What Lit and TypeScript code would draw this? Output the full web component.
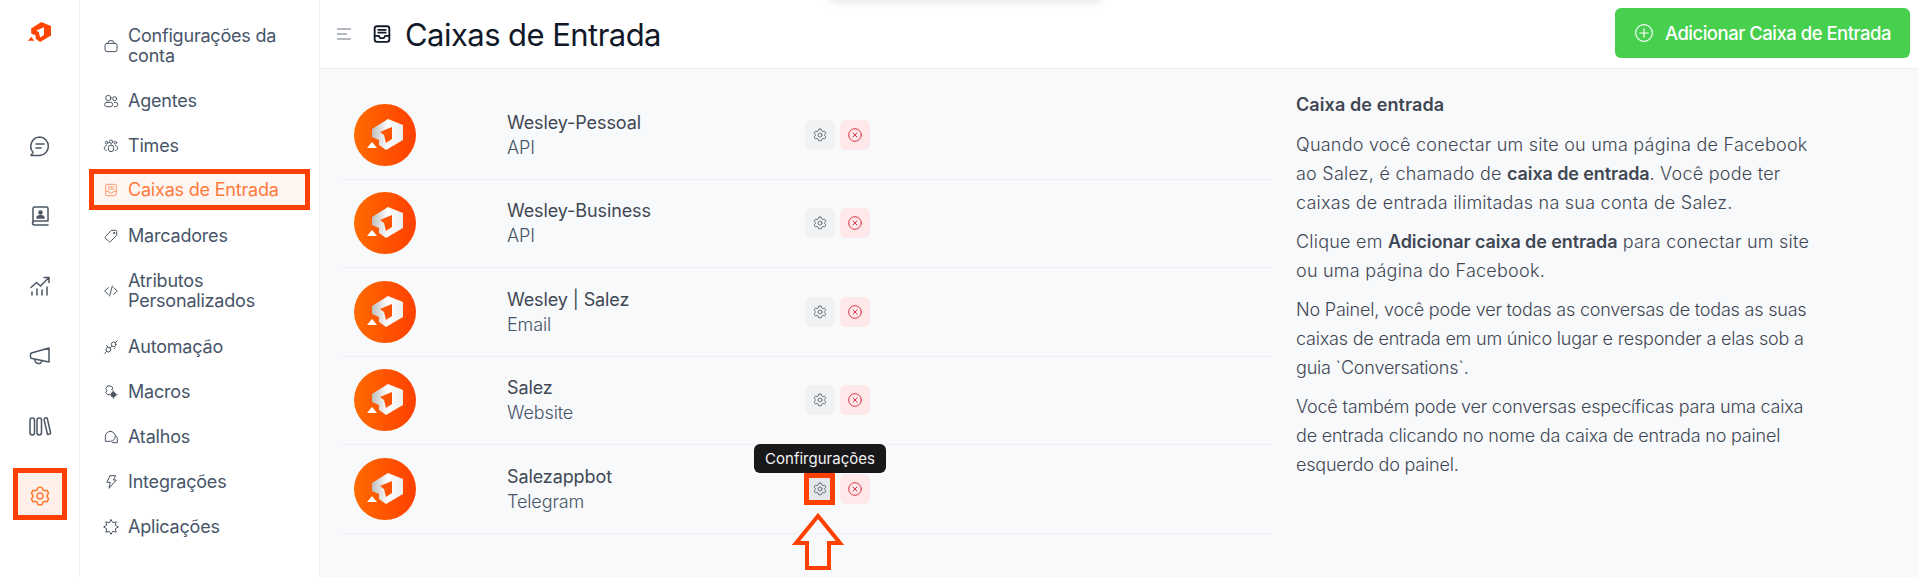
import { LitElement, html, css, svg } from "lit";
import { customElement } from "lit/decorators.js";

const ic = (body: unknown, size = 16, sw = 1.5) => html`<svg class="ic" width=${size} height=${size} viewBox="0 0 24 24" fill="none" stroke="currentColor" stroke-width=${sw} stroke-linecap="round" stroke-linejoin="round">${body}</svg>`;

const gearPath = svg`<path d="M12 3.2c.9 0 1.6.2 2.2.4l.5 2.2 1.9 1.1 2.2-.7c.8.9 1.4 2 1.8 3.2L19.1 11v2.1l1.5 1.6c-.4 1.2-1 2.3-1.8 3.2l-2.2-.7-1.9 1.1-.5 2.2c-1.4.4-3 .4-4.4 0l-.5-2.2-1.9-1.1-2.2.7c-.8-.9-1.4-2-1.8-3.2l1.5-1.6V11L3.4 9.4c.4-1.2 1-2.3 1.8-3.2l2.2.7 1.9-1.1.5-2.2c.6-.2 1.3-.4 2.2-.4z"/><circle cx="12" cy="12" r="3"/>`;
const inboxPath = svg`<rect x="4" y="3.5" width="16" height="17" rx="2.5"/><path d="M4 14h4.500l1.500 2.500h4l1.500-2.500H20M8 7.500h8M8 10.500h8"/>`;

const navItems: [string, unknown][] = [
  ["Configurações da conta", svg`<rect x="3" y="8" width="18" height="12.5" rx="3"/><path d="M8 8V6.500A2.500 2.500 0 0 1 10.500 4h3A2.500 2.500 0 0 1 16 6.500V8"/>`],
  ["Agentes", svg`<circle cx="8" cy="7.5" r="4"/><circle cx="17.5" cy="8.5" r="3"/><rect x="2.5" y="14" width="12" height="6.5" rx="3.2"/><path d="M17 20.500h2a3 3 0 0 0 0-6.500h-2"/>`],
  ["Times", svg`<circle cx="12" cy="5.5" r="2.5"/><circle cx="5.5" cy="7" r="2"/><circle cx="18.5" cy="7" r="2"/><rect x="8" y="10.5" width="8" height="10" rx="4"/><path d="M5 11.500c-2 .2-3 1.700-3 3.500s1 3.300 3 3.500M19 11.500c2 .2 3 1.700 3 3.500s-1 3.300-3 3.500"/>`],
  ["Caixas de Entrada", inboxPath],
  ["Marcadores", svg`<path d="M13 3.500h6a1.500 1.500 0 0 1 1.500 1.500v6L11 20.500a1.500 1.500 0 0 1-2.100 0l-5.400-5.400a1.500 1.500 0 0 1 0-2.100z"/><circle cx="16.500" cy="7.500" r="1"/>`],
  ["Atributos Personalizados", svg`<path d="M8 7l-5.500 5L8 17M16 7l5.500 5-5.500 5M14 4.500l-4 15"/>`],
  ["Automação", svg`<path d="M2.500 21.500l3-3M21.500 2.500l-3 3M11 13l2-2"/><circle cx="8" cy="16" r="3.500"/><circle cx="16" cy="8" r="3.500"/><path d="M5.500 9.500l1.500 2M18 13l-1.500 1.500"/>`],
  ["Macros", svg`<path d="M7 3h5l3 3-2 3 1 1M7 3L4 7l2 3-2 3 3 3h2"/><circle cx="15.500" cy="16" r="3.500" fill="currentColor"/><path d="M15.500 10.500v2M15.500 19.500v2M10 16h2M19 16h2"/>`],
  ["Atalhos", svg`<path d="M11 3.500a7.500 7.500 0 0 1 7.500 7.500c0 4.100-3.400 7.500-7.500 7.500H3.500V11A7.500 7.500 0 0 1 11 3.500z"/><path d="M19 10c1.600 1 2.500 2.700 2.500 4.500v6H14"/>`],
  ["Integrações", svg`<path d="M11 2.500h8l-3.500 6.500h4.500L9 21.500l2-9H6.500z"/>`],
  ["Aplicações", svg`<path d="M12 1l2.700 4.500 5.100-1.300-1.300 5.100L23 12l-4.500 2.700 1.300 5.100-5.100-1.300L12 23l-2.700-4.500-5.100 1.300 1.300-5.100L1 12l4.500-2.700-1.300-5.100 5.100 1.300z"/>`],
];

const railIcons: unknown[] = [
  svg`<path d="M12 3a9.300 9.300 0 0 1 0 18.500H3l2-3.200A9.300 9.300 0 0 1 12 3z"/><path d="M8 10h8M8 14h5"/>`,
  svg`<path d="M5 18.500V4.500A1.500 1.500 0 0 1 6.500 3h12A1.500 1.500 0 0 1 20 4.500V17H6.500a2 2 0 0 0 0 4H20"/><circle cx="12.500" cy="8.500" r="1.500" fill="currentColor"/><path d="M9 14c0-1.500 1.500-2.300 3.500-2.300S16 12.500 16 14z" fill="currentColor"/>`,
  svg`<path d="M3 13.500l5.500-5 4 3.500 8-8M16 3.500h5v5M4 21v-3M9 21v-6M14 21v-5M19 21v-8"/>`,
  svg`<path d="M21 4v14L4 14.500a1.500 1.500 0 0 1-1.500-1.500v-2.500A1.500 1.500 0 0 1 3.500 9z"/><path d="M7 15.500a3.500 3.500 0 0 0 7 1"/>`,
  svg`<rect x="2" y="4" width="4.500" height="17" rx="2.200"/><rect x="9" y="4" width="4.500" height="17" rx="2.200"/><path d="M16.500 5l-.5.200 3.500 15.300 2.500-.5a1.500 1.500 0 0 0 .5-1.500L19.500 5.500a1.500 1.500 0 0 0-3-.5z"/>`,
  gearPath,
];

const inboxes = [
  ["Wesley-Pessoal", "API"],
  ["Wesley-Business", "API"],
  ["Wesley | Salez", "Email"],
  ["Salez", "Website"],
  ["Salezappbot", "Telegram"],
];

const logoBody = "M34 15L49 21 49 36 32 46 25 41 25 36 18 33 18 25zM38 23L26 28 30 31 32 39 38 35z";
const bigLogo = svg`<svg width="62" height="62" viewBox="0 0 62 62"><defs><linearGradient id="g" x1="0" x2="1" y1="0" y2="0"><stop offset="0" stop-color="#ff6a00"/><stop offset="1" stop-color="#ff4000"/></linearGradient><linearGradient id="w" x1="0" x2="1" y1="0" y2="0"><stop offset="0" stop-color="#bdbdbd"/><stop offset=".5" stop-color="#fdfdfd"/><stop offset="1" stop-color="#eeeeee"/></linearGradient></defs><circle cx="31" cy="31" r="31" fill="url(#g)"/><path d=${logoBody} fill="url(#w)" fill-rule="evenodd"/><path d="M13 44l5-6 5 6z" fill="#fff"/></svg>`;

@customElement("app-root")
export class AppRoot extends LitElement {
  static styles = css`
    :host { display: block; position: relative; width: 1918px; height: 577px; overflow: hidden; font-family: Inter, "Liberation Sans", sans-serif; background: #f8f9fb; color: #475569; }
    .app { display: flex; height: 577px; }
    .rail { width: 79px; flex: none; background: #fff; border-right: 1px solid #eef0f3; display: flex; flex-direction: column; align-items: center; color: #4b5563; }
    .logo { height: 111px; padding-top: 22px; box-sizing: border-box; }
    .rail-item { width: 44px; height: 70px; display: flex; align-items: center; justify-content: center; }
    .rail-item.active { color: #ff7a2f; position: relative; }
    .rail-item.active::before { content: ""; position: absolute; left: 0; right: 0; top: 12px; bottom: 12px; background: #fff1ea; }
    .rail-item svg { position: relative; }
    .side { width: 240px; flex: none; box-sizing: border-box; background: #fff; border-right: 1px solid #eef0f3; padding: 23px 10px 0 13px; }
    .nav { display: flex; align-items: center; gap: 9px; padding: 0 0 0 10px; min-height: 45px; font-size: 18px; line-height: 20px; color: #475569; letter-spacing: -.2px; }
    .nav.wrap { min-height: 66px; }
    .nav.first { margin-bottom: 10px; height: 45px; }
    .nav .ic { flex: none; color: #4b5563; }
    .nav.active { color: #ff7a3d; background: #fff6f2; height: 36px; min-height: 36px; margin: 4px 0 5px; }
    .nav.active .ic { color: #ff9a6a; }
    .main { flex: 1; display: flex; flex-direction: column; min-width: 0; }
    .header { height: 69px; box-sizing: border-box; background: #fff; border-bottom: 1px solid #eef0f3; display: flex; align-items: center; padding: 2px 8px 2px 17px; }
    .burger { color: #9ca3af; margin-right: 20px; }
    .title-ic { color: #111827; margin-right: 12px; display: flex; }
    h1 { flex: 1; margin: 0; font-size: 31px; font-weight: 400; color: #111827; letter-spacing: -.55px; }
    .add { height: 50px; width: 295px; box-sizing: border-box; margin-top: -2px; border: 0; border-radius: 6px; background: #46d04e; color: #fff; font: 500 18.500px Inter, sans-serif; letter-spacing: -.5px; display: flex; align-items: center; justify-content: center; gap: 11px; }
    .content { flex: 1; display: flex; }
    .list { width: 932px; margin-left: 20px; padding-top: 22px; flex: none; }
    .row { display: flex; align-items: center; height: 88.500px; box-sizing: border-box; border-bottom: 1px solid #eef0f3; }
    .avatar { margin-left: 14px; width: 62px; height: 62px; flex: none; }
    .info { margin-left: 91px; width: 298px; flex: none; font-size: 18px; line-height: 25px; font-weight: 300; color: #475569; letter-spacing: -.1px; }
    .name { color: #3f4753; font-weight: 400; }
    .btn { width: 30px; height: 30px; border-radius: 6px; display: flex; align-items: center; justify-content: center; margin-right: 5px; background: #f1f2f4; color: #6b7280; }
    .btn.del { background: #ffe8ea; color: #dc3545; }
    .btn.hover { background: #e5e7eb; }
    .help { margin-left: 24px; width: 525px; padding-top: 26px; font-size: 18px; line-height: 29px; font-weight: 300; color: #3f4753; letter-spacing: .23px; }
    .help h4 { margin: 0 0 15px; font-size: 18px; line-height: 20px; font-weight: 600; color: #3f4753; letter-spacing: .1px; }
    .help p { margin: 0 0 10px; }
    .help p.tight { letter-spacing: -.2px; }
    .help b { font-weight: 600; color: #3f4753; letter-spacing: -.1px; }
    .tip { position: absolute; left: 754px; top: 444px; width: 132px; height: 29px; box-sizing: border-box; border-radius: 6px; background: #18181b; color: #f4f4f5; font-size: 15px; line-height: 29px; text-align: center; }
    .mark { position: absolute; box-sizing: border-box; border: 5px solid #ff4000; }
    .mark-a { left: 89px; top: 169px; width: 221px; height: 41px; }
    .mark-b { left: 13px; top: 468px; width: 54px; height: 52px; }
    .mark-c { left: 804px; top: 473px; width: 31px; height: 32px; }
    .arrow { position: absolute; left: 790px; top: 512px; }
    .toast { position: absolute; left: 830px; top: -12px; width: 270px; height: 12px; box-shadow: 0 2px 8px rgba(0,0,0,.1); }
    .logo-small { display: block; }
  `;

  render() {
    return html`
      <div class="app">
        <div class="rail">
          <div class="logo">
            <svg class="logo-small" width="23" height="20" viewBox="13 15 36 31"><path d=${logoBody} fill="#ff4500" fill-rule="evenodd"/><path d="M13 44l5-6 5 6z" fill="#ff4500"/></svg>
          </div>
          ${railIcons.map((b, i) => html`<div class="rail-item ${i === 5 ? "active" : ""}">${ic(b, 24, 1.500)}</div>`)}
        </div>
        <div class="side">
          ${navItems.map(([t, b], i) => html`<div class="nav ${i === 0 ? "first" : ""} ${i === 3 ? "active" : ""} ${i === 5 ? "wrap" : ""}">${ic(b, 16, 1.500)}<span>${t}</span></div>`)}
        </div>
        <div class="main">
          <div class="header">
            <svg class="burger" width="14" height="14" viewBox="0 0 14 14" fill="none" stroke="currentColor" stroke-width="1.500"><path d="M0 2h14M0 7h10M0 12h14"/></svg>
            <span class="title-ic">${ic(inboxPath, 22, 2)}</span>
            <h1>Caixas de Entrada</h1>
            <button class="add">${ic(svg`<circle cx="12" cy="12" r="10"/><path d="M12 7v10M7 12h10"/>`, 20, 1.400)}<span>Adicionar Caixa de Entrada</span></button>
          </div>
          <div class="content">
            <div class="list">
              ${inboxes.map(([n, s], i) => html`<div class="row">
                <div class="avatar">${bigLogo}</div>
                <div class="info"><div class="name">${n}</div><div>${s}</div></div>
                <div class="btn ${i === 4 ? "hover" : ""}">${ic(gearPath, 16, 1.500)}</div>
                <div class="btn del">${ic(svg`<circle cx="12" cy="12" r="9.500"/><path d="M9 9l6 6M15 9l-6 6"/>`, 16, 1.500)}</div>
              </div>`)}
            </div>
            <div class="help">
              <h4>Caixa de entrada</h4>
              <p>Quando você conectar um site ou uma página de Facebook ao Salez, é chamado de <b>caixa de entrada</b>. Você pode ter caixas de entrada ilimitadas na sua conta de Salez.</p>
              <p>Clique em <b>Adicionar caixa de entrada</b> para conectar um site ou uma página do Facebook.</p>
              <p class="tight">No Painel, você pode ver todas as conversas de todas as suas caixas de entrada em um único lugar e responder a elas sob a guia \`Conversations\`.</p>
              <p class="tight">Você também pode ver conversas específicas para uma caixa de entrada clicando no nome da caixa de entrada no painel esquerdo do painel.</p>
            </div>
          </div>
        </div>
      </div>
      <div class="toast"></div>
      <div class="mark mark-a"></div>
      <div class="mark mark-b"></div>
      <div class="mark mark-c"></div>
      <div class="tip">Confirgurações</div>
      <svg class="arrow" width="56" height="60" viewBox="0 0 56 60" fill="none" stroke="#ff4000" stroke-width="4" stroke-linejoin="miter"><path d="M28 4L6 31h11v25h22V31h11z"/></svg>
    `;
  }
}
